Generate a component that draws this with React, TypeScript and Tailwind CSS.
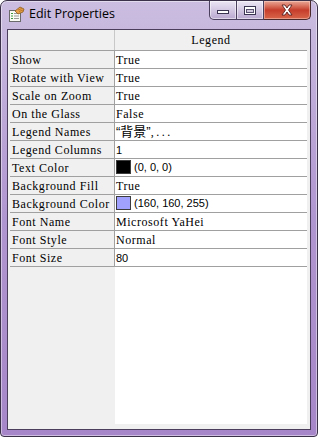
import React from 'react';

type Row = {
  label: string;
  value: React.ReactNode;
};

const mono = "font-['Liberation_Serif',serif] text-[12px] tracking-[0.55px] text-black";
const sans = "font-['Liberation_Sans',sans-serif] text-[11px] text-black";

function Swatch({ color }: { color: string }) {
  return <span className={`inline-block w-[15px] h-[14px] border border-[#3c3c3c] ${color}`} />;
}

const rows: Row[] = [
  { label: 'Show', value: <span className={mono}>True</span> },
  { label: 'Rotate with View', value: <span className={mono}>True</span> },
  { label: 'Scale on Zoom', value: <span className={mono}>True</span> },
  { label: 'On the Glass', value: <span className={mono}>False</span> },
  {
    label: 'Legend Names',
    value: (
      <span className="font-['Liberation_Sans','Noto_Sans_CJK_SC',sans-serif] text-[13px] text-black">
        “背景”<span className="font-['Liberation_Serif',serif] text-[12px] tracking-[2.5px]">,...</span>
      </span>
    ),
  },
  { label: 'Legend Columns', value: <span className={sans}>1</span> },
  {
    label: 'Text Color',
    value: (
      <span className="flex items-center gap-[3px] pt-[1px]">
        <Swatch color="bg-black" />
        <span className={sans}>(0, 0, 0)</span>
      </span>
    ),
  },
  { label: 'Background Fill', value: <span className={mono}>True</span> },
  {
    label: 'Background Color',
    value: (
      <span className="flex items-center gap-[3px] pt-[1px]">
        <Swatch color="bg-[#a0a0ff]" />
        <span className={sans}>(160, 160, 255)</span>
      </span>
    ),
  },
  { label: 'Font Name', value: <span className={mono}>Microsoft YaHei</span> },
  { label: 'Font Style', value: <span className={mono}>Normal</span> },
  { label: 'Font Size', value: <span className={sans}>80</span> },
];

function AppIcon() {
  return (
    <svg width="17" height="17" viewBox="0 0 17 17">
      <rect x="1.5" y="4.5" width="11" height="11" fill="#fbfbf6" stroke="#6b6b6b" />
      <rect x="3" y="7" width="2" height="1" fill="#3f9a3f" />
      <rect x="6" y="7" width="5" height="1" fill="#9a9a9a" />
      <rect x="3" y="9.5" width="2" height="1" fill="#3f9a3f" />
      <rect x="6" y="9.5" width="5" height="1" fill="#9a9a9a" />
      <rect x="3" y="12" width="2" height="1" fill="#3f9a3f" />
      <rect x="6" y="12" width="5" height="1" fill="#9a9a9a" />
      <path d="M7 5 L12 1 L16 3 L15 6 L10 8 Z" fill="#e9a24a" stroke="#8a5a1c" strokeWidth="0.8" />
      <path d="M10 4 L14 2.5 M11 5.5 L15 4" stroke="#b06d20" strokeWidth="0.8" />
    </svg>
  );
}

function TitleButtons() {
  return (
    <div className="flex h-[19px] self-start">
      <div className="w-[28px] h-full flex items-center justify-center border border-t-0 border-[#4a3f5c] rounded-bl-[5px] bg-gradient-to-b from-[#ece6f4] via-[#d3c8e2] to-[#b9a8d0] shadow-[inset_0_0_0_1px_rgba(255,255,255,0.5)]">
        <div className="w-[12px] h-[4px] mt-[4px] bg-white border border-[#3a3450]" />
      </div>
      <div className="w-[27px] h-full flex items-center justify-center border-b border-r border-[#4a3f5c] bg-gradient-to-b from-[#ece6f4] via-[#d3c8e2] to-[#b9a8d0] shadow-[inset_0_0_0_1px_rgba(255,255,255,0.5)]">
        <div className="w-[12px] h-[9px] border border-[#3a3450] bg-white flex items-center justify-center">
          <div className="w-[8px] h-[4px] mt-[1px] border border-[#5a5270] bg-[#cfc6dc]" />
        </div>
      </div>
      <div className="w-[47px] h-full flex items-center justify-center border-b border-r border-[#4a2a2a] rounded-br-[5px] bg-gradient-to-b from-[#e9a797] via-[#c63d2b] to-[#d8654a] shadow-[inset_0_0_0_1px_rgba(255,220,210,0.45)]">
        <svg width="14" height="12" viewBox="0 0 14 12">
          <path
            d="M2 1 L5 1 L7 4 L9 1 L12 1 L8.5 6 L12 11 L9 11 L7 8 L5 11 L2 11 L5.5 6 Z"
            fill="#ffffff"
            stroke="#5a2020"
            strokeWidth="0.9"
            strokeLinejoin="round"
          />
        </svg>
      </div>
    </div>
  );
}

export default function App() {
  return (
    <div className="w-[318px] h-[437px] flex flex-col px-[6px] pb-[6px] border border-[#3b3148] rounded-t-[7px] rounded-b-[4px] bg-gradient-to-b from-[#cbbde0] via-[#b096d0] to-[#a686c8] shadow-[inset_0_0_0_1px_rgba(255,255,255,0.45)]">
      <div className="h-[28px] flex items-start shrink-0">
        <div className="flex items-center h-[26px] pl-[1px]">
          <AppIcon />
          <span className="ml-[4px] font-['Open_Sans',sans-serif] text-[12.5px] text-black">Edit Properties</span>
        </div>
        <div className="ml-auto">
          <TitleButtons />
        </div>
      </div>

      <div className="flex-1 flex flex-col border border-[#4a3e5c] bg-[#f0f0f0] pl-[2px] pr-[3px] pb-[5px]">
        <div className="h-[21px] flex border-b border-[#a0a0a0] shrink-0">
          <div className="w-[105px] border-r border-[#c8c8c8]" />
          <div className={`flex-1 flex items-center justify-center ${mono}`}>Legend</div>
        </div>
        {rows.map((row) => (
          <div key={row.label} className="h-[18px] flex border-b border-[#a0a0a0] shrink-0">
            <div className={`w-[105px] flex items-center pl-[2px] border-r border-[#a0a0a0] whitespace-nowrap ${mono}`}>
              {row.label}
            </div>
            <div className="flex-1 bg-white pl-[1px] leading-[14px] whitespace-nowrap">{row.value}</div>
          </div>
        ))}
        <div className="flex-1 flex">
          <div className="w-[105px]" />
          <div className="flex-1 bg-white" />
        </div>
      </div>
    </div>
  );
}
